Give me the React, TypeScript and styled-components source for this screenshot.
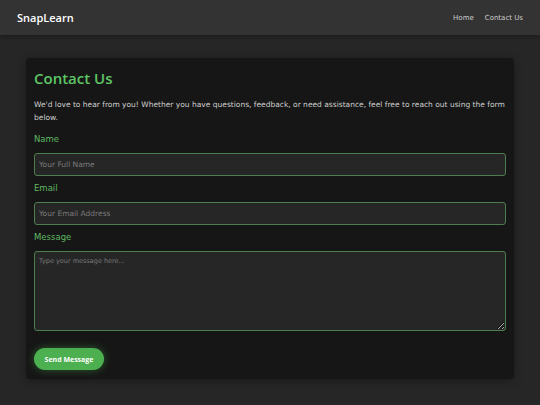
import styled, { createGlobalStyle } from "styled-components";

const GlobalStyle = createGlobalStyle`
  * { box-sizing: border-box; }
  body {
    margin: 0;
    background: #262626;
    font-family: "DejaVu Sans", "Noto Sans", sans-serif;
  }
`;

export default function App() {
  return (
    <>
      <GlobalStyle />
      <Page>
        <Header>
          <Logo>SnapLearn</Logo>
          <Nav>
            <NavLink href="#">Home</NavLink>
            <NavLink href="#">Contact Us</NavLink>
          </Nav>
        </Header>
        <Main>
          <Card>
            <Title>Contact Us</Title>
            <Intro>
              We'd love to hear from you! Whether you have questions, feedback,
              or need assistance, feel free to reach out using the form below.
            </Intro>
            <Field>
              <Label>Name</Label>
              <Input placeholder="Your Full Name" />
            </Field>
            <Field>
              <Label>Email</Label>
              <Input placeholder="Your Email Address" />
            </Field>
            <Field>
              <Label>Message</Label>
              <TextArea placeholder="Type your message here..." />
            </Field>
            <SendButton>Send Message</SendButton>
          </Card>
        </Main>
      </Page>
    </>
  );
}

const Page = styled.div`
  min-height: 100vh;
  background: #262626;
`;

const Header = styled.header`
  height: 35px;
  background: #333333;
  display: flex;
  align-items: center;
  justify-content: space-between;
  padding: 0 17px;
  box-shadow: 0 2px 4px rgba(0, 0, 0, 0.25);
`;

const Logo = styled.div`
  color: #ffffff;
  font-family: "Open Sans", sans-serif;
  font-size: 11px;
  font-weight: 600;
`;

const Nav = styled.nav`
  display: flex;
  gap: 11px;
`;

const NavLink = styled.a`
  color: #cccccc;
  font-size: 7px;
  text-decoration: none;
`;

const Main = styled.main`
  padding: 23px 26px;
`;

const Card = styled.section`
  background: #161616;
  border-radius: 4px;
  padding: 8px 8px 9px;
  box-shadow: 0 2px 8px rgba(0, 0, 0, 0.3);
`;

const Title = styled.h1`
  margin: 0;
  color: #5fc665;
  font-family: "Open Sans", sans-serif;
  font-size: 15px;
  font-weight: 600;
  line-height: 24px;
`;

const Intro = styled.p`
  margin: 8px 0 9px;
  color: #cfcfcf;
  font-size: 7.5px;
  line-height: 13px;
`;

const Field = styled.div`
  display: flex;
  flex-direction: column;
  margin-bottom: 6px;
`;

const Label = styled.label`
  color: #5fb862;
  font-size: 8.5px;
  line-height: 13px;
  margin-bottom: 7px;
`;

const Input = styled.input`
  height: 23px;
  background: #262626;
  border: 1px solid #4e7d4e;
  border-radius: 3px;
  padding: 0 4px;
  color: #dddddd;
  font-family: inherit;
  font-size: 7.5px;
  outline: none;
  &::placeholder {
    color: #7a7a7a;
  }
`;

const TextArea = styled.textarea`
  height: 80px;
  background: #262626;
  border: 1px solid #4e7d4e;
  border-radius: 3px;
  padding: 5px 4px;
  color: #dddddd;
  font-family: inherit;
  font-size: 6.5px;
  resize: vertical;
  outline: none;
  &::placeholder {
    color: #7a7a7a;
  }
`;

const SendButton = styled.button`
  margin-top: 11px;
  width: 70px;
  height: 22px;
  border: none;
  border-radius: 11px;
  background: #4caf50;
  color: #ffffff;
  font-family: "Open Sans", sans-serif;
  font-size: 7px;
  font-weight: 700;
  box-shadow: 0 0 8px rgba(76, 175, 80, 0.45);
  cursor: pointer;
`;
